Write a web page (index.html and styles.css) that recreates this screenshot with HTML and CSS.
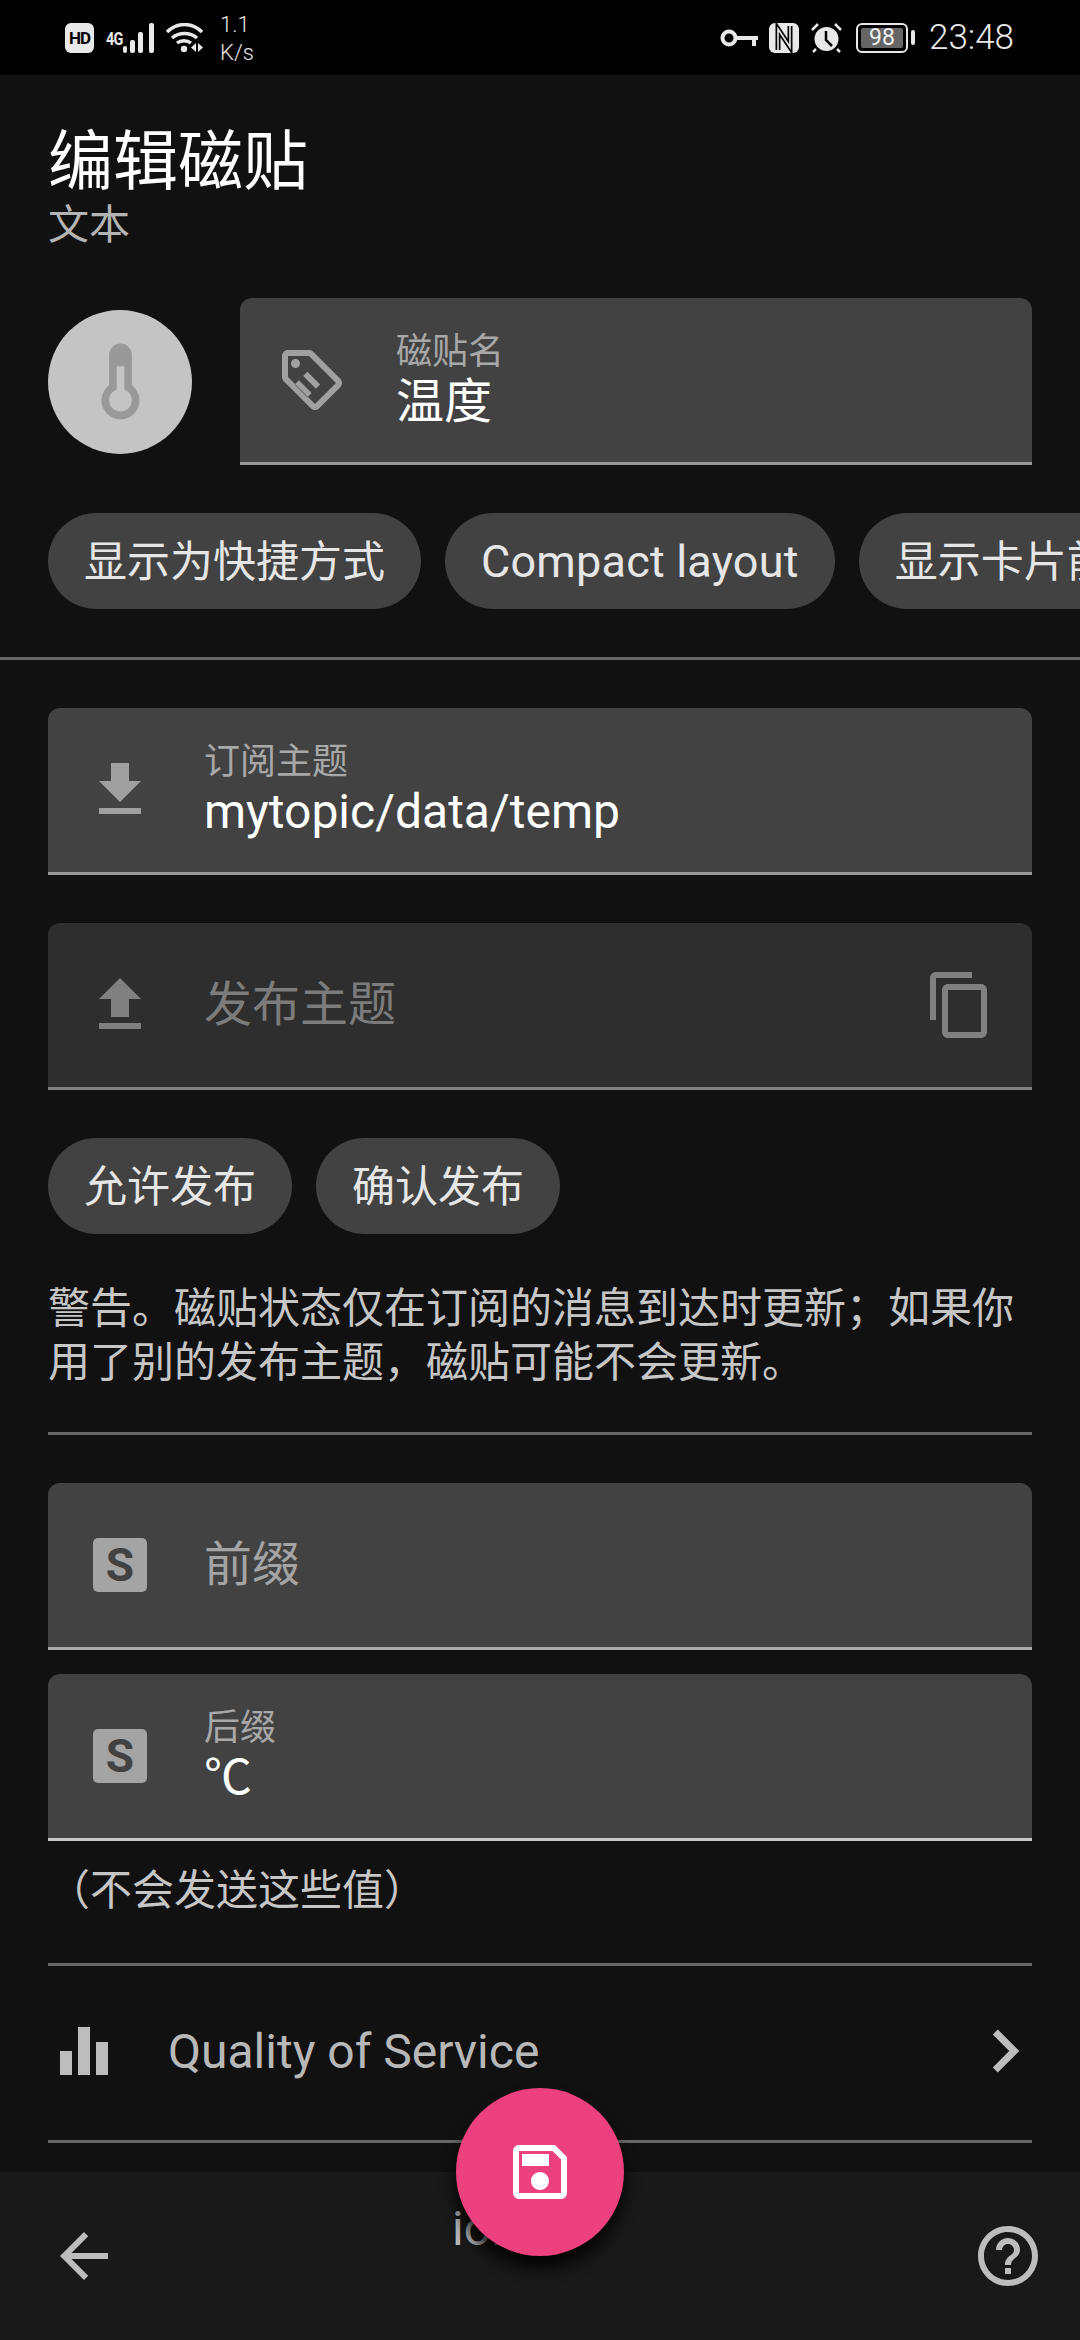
FILE: index.html
```
<!DOCTYPE html>
<html lang="zh-CN">
<head>
<meta charset="utf-8">
<title>编辑磁贴</title>
<link rel="stylesheet" href="styles.css">
</head>
<body>
<div class="phone">
	<div class="status">
		<div class="status-left">
			<span class="hd">HD</span>
			<span class="net">4G</span>
			<svg class="signal" width="33" height="30" viewBox="0 0 33 30"><rect x="0" y="23" width="4" height="7" rx="2"/><rect x="7" y="17" width="5" height="13" rx="2"/><rect x="15" y="9" width="5" height="21" rx="2"/><rect x="26" y="0" width="5" height="30" rx="2"/></svg>
			<svg class="wifi" width="37" height="30" viewBox="0 0 37 30"><path d="M1 9C11-1 26-1 36 9M6 15c7-6 18-6 25 0M11 20c4-3 10-3 14 0" fill="none" stroke="#e8e8e8" stroke-width="3.4"/><circle cx="18" cy="26" r="3.2"/><path d="M30 20v9l-5-4.500zM32 20v9l5-4.500z"/></svg>
			<div class="speed"><span>1.1</span><span>K/s</span></div>
		</div>
		<div class="status-right">
			<svg width="38" height="18" viewBox="0 0 38 18"><circle cx="9" cy="9" r="6.500" fill="none" stroke="#e8e8e8" stroke-width="4"/><path d="M15 7h23v4h-2v6h-4v-6H15z"/></svg>
			<svg width="30" height="30" viewBox="0 0 30 30"><rect width="30" height="30" rx="6"/><path d="M9 27V6l12 18V3" fill="none" stroke="#000" stroke-width="5"/><path d="M9 27V6l12 18V3" fill="none" stroke="#e8e8e8" stroke-width="1.600"/></svg>
			<svg width="33" height="30" viewBox="0 0 33 30"><circle cx="16.500" cy="16" r="12"/><path d="M16 8v9l6 6" fill="none" stroke="#000" stroke-width="2.500"/><path d="M2 7l6-6M31 7l-6-6M6 26l-3 3M27 26l3 3" fill="none" stroke="#e8e8e8" stroke-width="2.500"/></svg>
			<div class="battery"><div class="battery-body"><span>98</span></div><div class="battery-tip"></div></div>
			<span class="clock">23:48</span>
		</div>
	</div>

	<div class="content">
		<div class="head">
			<h1>编辑磁贴</h1>
			<p>文本</p>
		</div>

		<div class="tile-row">
			<div class="tile-icon">
				<svg width="91" height="91" viewBox="0 0 24 24"><path fill-rule="evenodd" d="M15 13V5a3 3 0 0 0-6 0v8a5 5 0 1 0 6 0zM11 8h2v6.100a3 3 0 1 1-2 0z"/></svg>
			</div>
			<div class="field field-name">
				<svg class="ico" viewBox="0 0 24 24"><path d="M21.410 11.580l-9-9C12.050 2.220 11.550 2 11 2H4c-1.110 0-2 .89-2 2v7c0 .55.220 1.050.590 1.410l9 9c.36.360.860.590 1.410.590s1.050-.230 1.410-.590l7-7c.370-.360.590-.860.590-1.410s-.230-1.060-.590-1.420zM13 20l-9-9V4h7l9 9-7 7zM6.500 5a1.500 1.500 0 1 1 0 3 1.500 1.500 0 0 1 0-3zM10.470 17.760l-4.230-4.230 1.410-1.410 4.230 4.230zM13.300 14.930L9.060 10.700l1.420-1.420 4.240 4.240z"/></svg>
				<div class="field-text">
					<label>磁贴名</label>
					<span class="value">温度</span>
				</div>
			</div>
		</div>

		<div class="chips chips-scroll">
			<span class="chip">显示为快捷方式</span>
			<span class="chip chip-latin">Compact layout</span>
			<span class="chip">显示卡片前缀</span>
		</div>
		<div class="rule rule-full"></div>

		<div class="field">
			<svg class="ico" viewBox="0 0 24 24"><path d="M19 9h-4V3H9v6H5l7 7 7-7zM5 18v2h14v-2H5z"/></svg>
			<div class="field-text">
				<label>订阅主题</label>
				<span class="value">mytopic/data/temp</span>
			</div>
		</div>

		<div class="field field-off">
			<svg class="ico" viewBox="0 0 24 24"><path d="M9 16h6v-6h4l-7-7-7 7h4zM5 18h14v2H5z"/></svg>
			<div class="field-text"><span class="hint">发布主题</span></div>
			<svg class="ico" viewBox="0 0 24 24"><path d="M16 1H4c-1.100 0-2 .9-2 2v14h2V3h12V1zm3 4H8c-1.100 0-2 .9-2 2v14c0 1.100.9 2 2 2h11c1.100 0 2-.9 2-2V7c0-1.100-.9-2-2-2zm0 16H8V7h11v14z"/></svg>
		</div>

		<div class="chips">
			<span class="chip">允许发布</span>
			<span class="chip">确认发布</span>
		</div>

		<p class="warn">警告。磁贴状态仅在订阅的消息到达时更新；如果你用了别的发布主题，磁贴可能不会更新。</p>
		<div class="rule rule-warn"></div>

		<div class="field field-mid">
			<span class="sbox">S</span>
			<div class="field-text"><span class="hint hint-on">前缀</span></div>
		</div>
		<div class="field field-close field-bright">
			<span class="sbox">S</span>
			<div class="field-text">
				<label>后缀</label>
				<span class="value">℃</span>
			</div>
		</div>
		<p class="note">（不会发送这些值）</p>
		<div class="rule rule-note"></div>

		<div class="qos">
			<svg class="qos-ico" viewBox="0 0 24 24"><path d="M10 20h4V4h-4v16zm-6 0h4v-8H4v8zM16 9v11h4V9h-4z"/></svg>
			<span class="qos-text">Quality of Service</span>
			<svg class="qos-arrow" viewBox="0 0 24 24"><path d="M10 6L8.590 7.410 13.170 12l-4.580 4.590L10 18l6-6z"/></svg>
		</div>
		<div class="rule rule-qos"></div>
	</div>

	<div class="bar">
		<svg class="bar-ico" viewBox="0 0 24 24"><path d="M20 11H7.830l5.590-5.590L12 4l-8 8 8 8 1.410-1.410L7.830 13H20v-2z"/></svg>
		<span class="bar-text">ion</span>
		<svg class="bar-ico" viewBox="0 0 24 24"><path d="M11 18h2v-2h-2v2zm1-16C6.480 2 2 6.480 2 12s4.480 10 10 10 10-4.480 10-10S17.520 2 12 2zm0 18c-4.410 0-8-3.590-8-8s3.590-8 8-8 8 3.590 8 8-3.590 8-8 8zm0-14c-2.210 0-4 1.790-4 4h2c0-1.100.9-2 2-2s2 .9 2 2c0 2-3 1.750-3 5h2c0-2.250 3-2.500 3-5 0-2.210-1.790-4-4-4z"/></svg>
		<div class="fab">
			<svg width="72" height="72" viewBox="0 0 24 24"><path d="M17 3H5c-1.110 0-2 .9-2 2v14c0 1.100.89 2 2 2h14c1.100 0 2-.9 2-2V7l-4-4zm2 16H5V5h11.170L19 7.830V19zm-7-7c-1.660 0-3 1.340-3 3s1.340 3 3 3 3-1.340 3-3-1.340-3-3-3zM6 6h9v4H6z"/></svg>
		</div>
	</div>
</div>
</body>
</html>
```
FILE: styles.css
```
* { box-sizing: border-box; }
html, body { margin: 0; padding: 0; background: #111; }
body { font-family: "Roboto", "Noto Sans CJK SC", sans-serif; color: #fff; }
p, h1 { margin: 0; font-weight: 400; }

.phone { width: 1080px; height: 2340px; display: flex; flex-direction: column; overflow: hidden; }

/* status bar */
.status { flex: none; height: 75px; background: #000; display: flex; justify-content: space-between; align-items: center; padding: 0 66px 0 65px; color: #e8e8e8; }
.status svg { fill: #e8e8e8; flex: none; }
.status-left, .status-right { display: flex; align-items: center; }
.status-right svg { margin-right: 11px; }
.hd { width: 29px; height: 30px; background: #e8e8e8; border-radius: 6px; color: #000; font: 700 17px/30px "Roboto", sans-serif; text-align: center; letter-spacing: -1px; }
.net { font: 700 18px/16px "Roboto", sans-serif; align-self: flex-start; margin: 22px 0 0 12px; width: 17px; letter-spacing: -1px; transform: scaleX(.8); transform-origin: left; }
.wifi { margin: 0 17px 0 10px; }
.speed { display: flex; flex-direction: column; margin-top: 2px; font-size: 22px; line-height: 28px; font-weight: 300; }
.battery { display: flex; align-items: center; margin: 0 14px 0 2px; }
.battery-body { width: 52px; height: 30px; border: 2px solid #e8e8e8; border-radius: 6px; padding: 3px; }
.battery-body span { display: block; height: 20px; background: #666; border-radius: 2px; color: #f0f0f0; font-size: 23px; line-height: 20px; text-align: center; }
.battery-tip { width: 4px; height: 15px; background: #e8e8e8; border-radius: 2px; margin-left: 3px; }
.clock { font-size: 35px; font-weight: 300; line-height: 34px; }

/* page */
.content { flex: 1; min-height: 0; padding: 49px 48px 0; overflow: hidden; }
.head h1 { font-size: 65px; line-height: 76px; }
.head p { font-size: 41px; line-height: 50px; color: #b4b4b4; }

.tile-row { display: flex; align-items: center; gap: 48px; margin-top: 48px; }
.tile-icon { flex: none; width: 144px; height: 144px; border-radius: 50%; background: #c4c4c4; display: flex; align-items: center; justify-content: center; }
.tile-icon svg { fill: #999; }

.field { height: 167px; background: #424242; border-bottom: 3px solid #999; border-radius: 12px 12px 0 0; display: flex; align-items: center; padding: 0 36px; gap: 48px; margin-top: 48px; }
.tile-row .field { flex: 1; margin-top: 0; }
.field-close { margin-top: 24px; }
.field-mid { border-bottom-color: #a9a9a9; }
.field-bright { border-bottom-color: #c8c8c8; }
.field-off { background: #2e2e2e; border-bottom-color: #808080; }
.ico { flex: none; width: 72px; height: 72px; fill: #a0a0a0; }
.field-off .ico { fill: #808080; }
.field-text { flex: 1; display: flex; flex-direction: column; }
.field-text label { font-size: 36px; line-height: 44px; color: #a8a8a8; }
.field-text .value { font-size: 48px; line-height: 56px; color: #fff; }
.hint { font-size: 48px; line-height: 60px; color: #7c7c7c; }
.hint-on { color: #a4a4a4; }
.sbox { flex: none; width: 54px; height: 54px; margin: 0 9px; background: #a4a4a4; border-radius: 5px; color: #424242; font: 700 46px/54px "Roboto", sans-serif; text-align: center; }

.chips { display: flex; gap: 24px; margin-top: 48px; }
.chips-scroll { width: 1032px; margin-right: -48px; }
.chip { flex: none; height: 96px; padding: 0 36px; border-radius: 48px; background: #424242; color: #e6e6e6; font-size: 43px; line-height: 98px; white-space: nowrap; }
.chip-latin { font-size: 45px; letter-spacing: .2px; }

.rule { height: 3px; background: #666; margin-top: 48px; }
.rule-full { margin-left: -48px; margin-right: -48px; }
.rule-warn { margin-top: 42px; }
.rule-note { margin-top: 45px; }
.rule-qos { margin-top: 0; }

.warn { margin-top: 48px; font-size: 42px; line-height: 54px; color: #c6c6c6; }
.note { margin-top: 23px; font-size: 42px; line-height: 54px; color: #c6c6c6; }

.qos { height: 174px; display: flex; align-items: center; padding-bottom: 4px; }
.qos-ico { flex: none; width: 72px; height: 72px; fill: #bdbdbd; }
.qos-text { flex: 1; margin-left: 48px; font-size: 48px; color: #b8b8b8; }
.qos-arrow { flex: none; width: 86px; height: 86px; fill: #bdbdbd; margin-right: -16px; }

/* bottom bar */
.bar { flex: none; height: 168px; background: #191919; position: relative; display: flex; justify-content: space-between; padding: 48px 36px 0 48px; }
.bar-ico { width: 72px; height: 72px; fill: #bdbdbd; }
.bar-text { position: absolute; left: 452px; top: 28px; font-size: 48px; color: #b8b8b8; }
.fab { position: absolute; left: 456px; top: -84px; width: 168px; height: 168px; border-radius: 50%; background: #ec407f; box-shadow: 0 12px 16px rgba(0,0,0,.85); display: flex; align-items: center; justify-content: center; }
.fab svg { fill: #fff; }
```
